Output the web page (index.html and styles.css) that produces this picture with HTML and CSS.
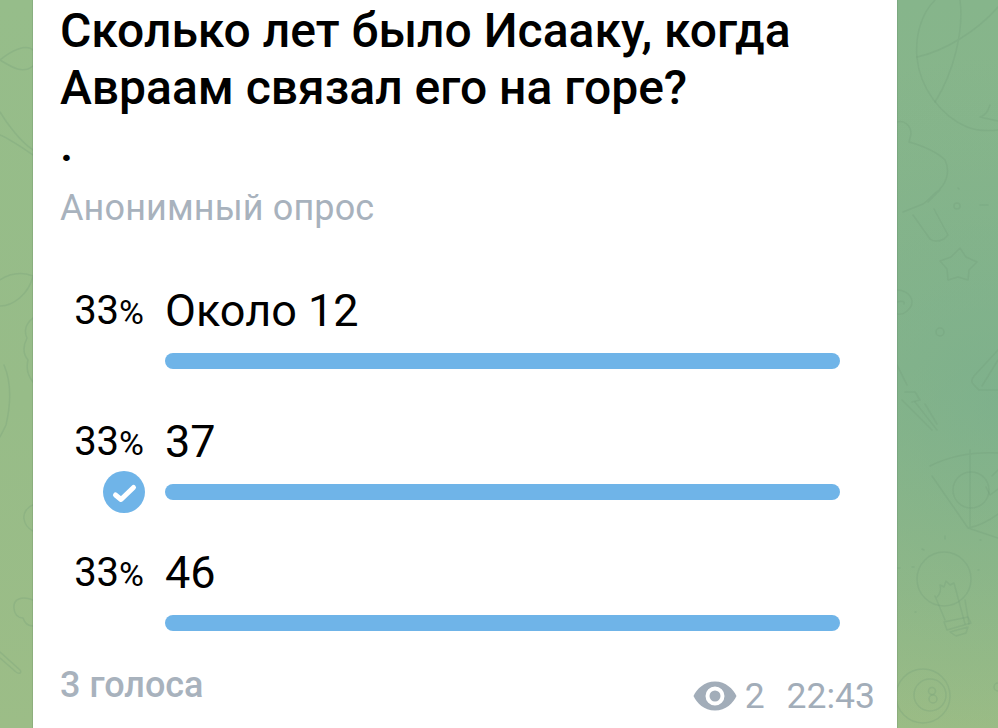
FILE: index.html
```html
<!DOCTYPE html>
<html lang="ru">
<head>
<meta charset="utf-8">
<title>Опрос</title>
<link rel="stylesheet" href="styles.css">
</head>
<body>
<div class="screen">
  <div class="gutter gutter-left">
    <svg class="doodles" viewBox="0 0 33 728" width="33" height="728" aria-hidden="true">
      <path d="M33 150c-12-8-26-26-33-38M0 135c10 4 24 14 33 20"/>
      <path d="M0 60c12-10 26-16 33-10M33 66c-10 8-20 2-33-6"/>
      <path d="M0 280c12-8 22-8 33-4 -4 18-20 30-33 30"/>
      <path d="M33 318c-8 6-9 14-6 20-4 8-4 16 1 22-2 8 0 16 5 22"/>
      <path d="M4 365c6 14 8 34 2 60l-6 12"/>
      <path d="M33 505c-6 2-10 8-9 14 1 6 5 10 9 12"/>
      <path d="M33 600c-10-4-20-2-19 8 0 6 4 10 9 10 2 6 6 8 10 8"/>
      <path d="M0 658l16 14c4 3 6 0 4-2l-20-18"/>
    </svg>
  </div>
  <main class="card">
    <h1 class="question">Сколько лет было Исааку, когда Авраам связал его на горе?</h1>
    <p class="dot">.</p>
    <p class="kind">Анонимный опрос</p>
    <div class="options">
      <div class="option">
        <span class="percent">33<small>%</small></span>
        <span class="label">Около 12</span>
        <span class="mark"></span>
        <span class="bar"></span>
      </div>
      <div class="option">
        <span class="percent">33<small>%</small></span>
        <span class="label">37</span>
        <span class="mark">
          <svg class="check" viewBox="0 0 42 42" width="42" height="42" aria-hidden="true">
            <circle cx="21" cy="21" r="21" fill="#6fb4e8"/>
            <path d="M12.5 24L18 28.500 30.500 16.500" fill="none" stroke="#fff" stroke-width="5" stroke-linecap="round" stroke-linejoin="round"/>
          </svg>
        </span>
        <span class="bar"></span>
      </div>
      <div class="option">
        <span class="percent">33<small>%</small></span>
        <span class="label">46</span>
        <span class="mark"></span>
        <span class="bar"></span>
      </div>
    </div>
    <div class="footer">
      <span class="votes">3 голоса</span>
      <span class="meta">
        <svg class="eye" viewBox="0 0 44 30" width="44" height="30" aria-hidden="true">
          <path fill-rule="evenodd" fill="#a2adb9" d="M22 0.5C33 0.5 40 8 43.5 15 40 22 33 29.5 22 29.5S4 22 0.500 15C4 8 11 0.500 22 0.500ZM22 5.500a9.500 9.500 0 1 0 0 19 9.500 9.500 0 0 0 0-19Z"/>
          <circle cx="22" cy="15" r="5.500" fill="#a2adb9"/>
        </svg>
        <span class="views">2</span>
        <span class="time">22:43</span>
      </span>
    </div>
  </main>
  <div class="gutter gutter-right">
    <svg class="doodles" viewBox="897 0 101 728" width="101" height="728" aria-hidden="true">
      <path d="M935 0c-14 14-20 36-18 58 3 30 24 58 50 69 10 4 22 4 31 3"/>
      <path d="M917 57c28-6 60-26 81-50M960 0c4 30-6 72-25 102"/>
      <path d="M990 105c-2 6-4 10-10 12l18 4"/>
      <path d="M897 122c8-2 14 4 14 12l-2 8c14 4 28 10 36 18 4 8 4 20-6 30-6 4-10 10-16 14l-20 8M940 190l-12 12"/>
      <path d="M913 215l17 24c4 3 10 2 14 0l4-4-14-26"/>
      <path d="M958 188l1 1M980 205h8"/>
      <circle cx="957" cy="206" r="3"/>
      <path d="M960 248l6 9 11 5-8 8-1 10-10-3-10 3-1-11-7-8 11-4z"/>
      <circle cx="940" cy="332" r="4"/>
      <path d="M897 290c9 0 15 6 15 12s-8 14-15 12M897 302c6-2 8 0 7 2"/>
      <path d="M998 350l-24 26c-3 4-3 6 0 9l5 5h19M998 360l-16 26"/>
      <path d="M897 365l10 20M905 392l10 0 5 8-8 2"/>
      <path d="M902 400l30 30M915 402l22 28M925 404l12 20"/>
      <path d="M930 466c20-10 45-14 68-13M932 476l36 52c10-2 22-8 30-14M968 528l30 10M970 450v78"/>
      <circle cx="971" cy="490" r="18"/>
      <path d="M986 487l4 8 8-6M998 470l-6 6"/>
      <circle cx="944" cy="579" r="27" fill="none"/>
      <path d="M935 596l10 24M965 600l4 24M937 597c4-4 4-8 3-12l4 2 2-6 4 4 4-2 11 41"/>
      <path d="M944 622l24-5 3 6-24 7zM950 632l18-5-2 6-10 3z"/>
      <path d="M980 540h1M945 536v3M922 549l2 1M912 567h2M978 570h1M915 612h1M897 568h3"/>
      <circle cx="923" cy="696" r="27"/>
      <circle cx="930" cy="695" r="16"/>
      <circle cx="932" cy="691" r="3.500"/>
      <circle cx="933" cy="699" r="4"/>
      <circle cx="998" cy="687" r="4"/>
    </svg>
  </div>
</div>
</body>
</html>
```

FILE: styles.css
```css
* {
  box-sizing: border-box;
}

html,
body {
  margin: 0;
  padding: 0;
  height: 100%;
}

body {
  overflow: hidden;
  font-family: Roboto, "Liberation Sans", sans-serif;
}

.screen {
  display: flex;
  width: 998px;
  height: 728px;
  overflow: hidden;
  background:
    radial-gradient(circle at 100% 55%, rgba(116, 172, 142, 0.55), rgba(116, 172, 142, 0) 32%),
    linear-gradient(180deg, #86b58b 0%, #8ab689 50%, #9bbc85 100%);
}

.gutter {
  flex: none;
  height: 728px;
}

.gutter-left {
  width: 33px;
  background: linear-gradient(180deg, #96bd8a 0%, #97bc88 55%, #9cbd87 100%);
}

.gutter-right {
  width: 101px;
}

.doodles {
  display: block;
  fill: none;
  stroke: #6f9c76;
  stroke-opacity: 0.26;
  stroke-width: 1.500;
  stroke-linecap: round;
  stroke-linejoin: round;
}

.card {
  flex: none;
  display: flex;
  flex-direction: column;
  width: 864px;
  height: 728px;
  padding: 2px 22px 0 27px;
  background: #fff;
  box-shadow: 0 0 1px 0 rgba(60, 90, 70, 0.8);
}

.question {
  width: 760px;
  margin: 0;
  font-size: 48px;
  font-weight: 500;
  line-height: 57px;
  color: #000;
}

.dot {
  margin: 0;
  font-size: 48px;
  font-weight: 500;
  line-height: 57px;
  color: #000;
}

.kind {
  margin: 8px 0 0;
  font-size: 36px;
  line-height: 54px;
  letter-spacing: 0.13px;
  color: #a8b2bd;
}

.options {
  display: flex;
  flex-direction: column;
  gap: 30px;
  margin-top: 52px;
  padding-right: 35px;
}

.option {
  display: grid;
  grid-template-columns: 105px 1fr;
  grid-template-rows: 53px 42px;
  height: 101px;
}

.percent {
  padding-right: 21px;
  font-size: 40px;
  line-height: 47px;
  text-align: right;
  color: #000;
}

.percent small {
  font-size: 34px;
}

.label {
  font-size: 45px;
  line-height: 48px;
  color: #000;
}

.mark {
  display: flex;
  justify-content: flex-end;
  padding-right: 20px;
}

.check {
  display: block;
}

.bar {
  display: block;
  align-self: center;
  height: 16px;
  border-radius: 8px;
  background: #6fb4e8;
}

.footer {
  display: flex;
  justify-content: space-between;
  align-items: flex-end;
  margin-top: 10px;
}

.votes {
  font-size: 36px;
  font-weight: 500;
  line-height: 50px;
  color: #a8b2bd;
}

.meta {
  display: flex;
  align-items: center;
  margin-bottom: -11px;
  font-size: 35.500px;
  line-height: 50px;
  color: #a2adb9;
}

.eye {
  display: block;
  margin-right: 8px;
}

.time {
  margin-left: 22px;
}
```
